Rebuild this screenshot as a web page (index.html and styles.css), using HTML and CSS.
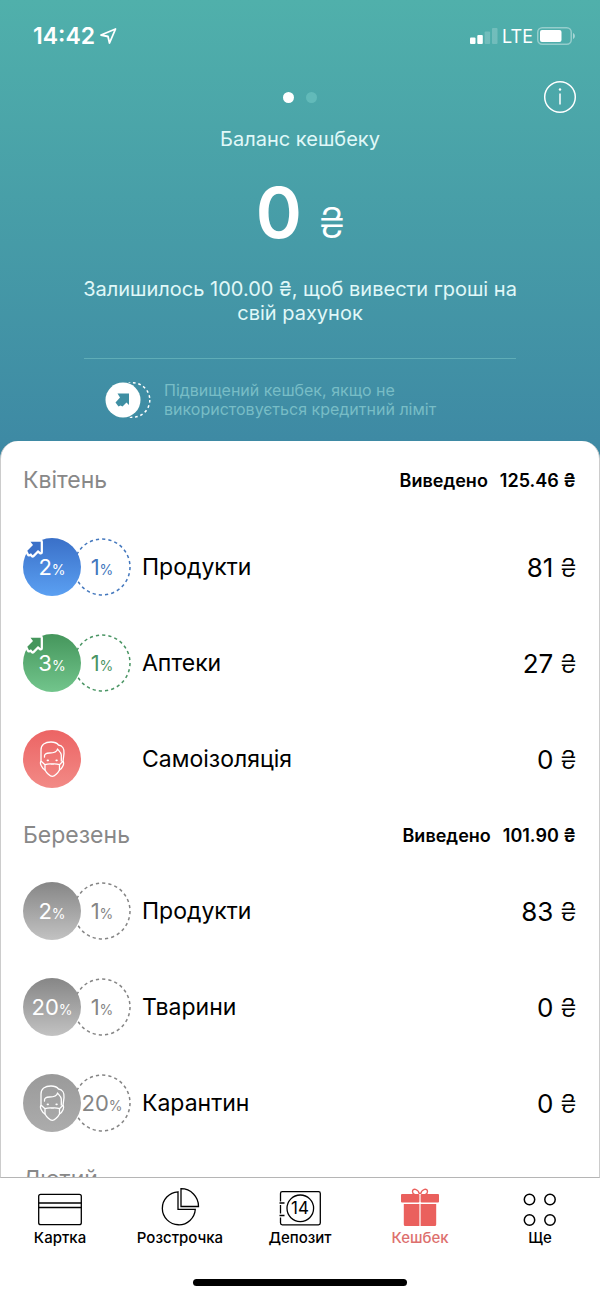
FILE: index.html
```html
<!DOCTYPE html>
<html lang="uk">
<head>
<meta charset="utf-8">
<meta name="viewport" content="width=device-width, initial-scale=1">
<title>Кешбек</title>
<link rel="stylesheet" href="styles.css">
</head>
<body>
<svg class="defs" aria-hidden="true">
  <symbol id="ring" viewBox="0 0 58 58"><circle cx="29" cy="29" r="28" fill="none" stroke="currentColor" stroke-width="1.5" stroke-dasharray="3.2 3.08"/></symbol>
  <symbol id="mask" viewBox="0 0 58 58">
    <g fill="none" stroke="#fff" stroke-width="1.3" stroke-linecap="round" stroke-linejoin="round">
      <path d="M18 31.500V20C18 15 22 12 28 12C31.500 12 34 13 35.500 15C39.500 15.500 41.500 19 41 23.500L40 31.500"/>
      <path d="M21.500 27C21 24.500 23 23 26.500 23C31 23 34 22 34.500 19C35.500 20.500 38 22 38.300 25V31"/>
      <path d="M18 31.500C16.500 33 18.500 38 22 40M40 31.500C41.500 33 40 38 36.500 40"/>
      <path d="M18.500 31.500L22 34.700C25 33.700 27 34 29.300 34C31.500 34 33.500 33.700 36.500 34.700L39.700 31.500M22 34.700V40C23.500 43 27 46.300 29.300 46.300C31.500 46.300 35 43 36.500 40V34.700"/>
      <path d="M24.500 30.300h.6M33.300 30.300h.6" stroke-width="1.800"/>
    </g>
  </symbol>
  <symbol id="boost" viewBox="0 0 24 24"><path d="M7.500 3.800H17.700V14.300L15 12L9.700 17.300L8 15.300L6 16.200L4.300 12.700L10 7Z" fill="currentColor" stroke="#fff" stroke-width="4.500" stroke-linejoin="round" paint-order="stroke"/></symbol>
</svg>
<div class="app">
  <header class="hero">
    <div class="status">
      <span class="clock">14:42
        <svg width="18" height="18" viewBox="0 0 18 18" fill="none" stroke="#fff" stroke-width="1.800" stroke-linejoin="round"><path d="M2 8L16.500 2L10.500 16L9 9.500Z"/></svg>
      </span>
      <span class="signal">
        <svg width="28" height="18" viewBox="0 0 28 18" fill="#fff"><rect x="0" y="10.500" width="5.500" height="6.500" rx="1"/><rect x="7.300" y="8" width="5.500" height="9" rx="1"/><g opacity=".2"><rect x="14.600" y="4.500" width="5.500" height="12.500" rx="1"/><rect x="22" y="1" width="5.500" height="16" rx="1"/></g></svg>
        LTE
        <svg width="39" height="18" viewBox="0 0 39 18"><rect x=".75" y=".75" width="33.500" height="16.500" rx="4.500" fill="none" stroke="#fff" stroke-opacity=".4" stroke-width="1.500"/><rect x="3" y="3" width="21.500" height="12" rx="2" fill="#fff"/><path d="M36 6c2.500 1 2.500 5 0 6z" fill="#fff" opacity=".5"/></svg>
      </span>
    </div>
    <div class="pager">
      <div class="dots"><i class="dot dot-on"></i><i class="dot"></i></div>
      <button class="info" type="button" aria-label="Інформація">
        <svg width="34" height="34" viewBox="0 0 34 34" fill="none" stroke="#fff" stroke-width="1.500"><circle cx="17" cy="17" r="15.300"/><path d="M17 13.500v11"/><circle cx="17" cy="9.500" r="1.200" fill="#fff" stroke="none"/></svg>
      </button>
    </div>
    <h1 class="title">Баланс кешбеку</h1>
    <p class="balance">0 <span class="currency">₴</span></p>
    <p class="left">Залишилось 100.00 ₴, щоб вивести гроші на свій рахунок</p>
    <div class="hint">
      <svg width="46" height="38" viewBox="0 0 46 38"><circle cx="27.500" cy="19" r="17.300" fill="none" stroke="#fff" stroke-width="1.500" stroke-dasharray="2.700 2.730"/><circle cx="18" cy="19" r="18.500" fill="#4290a3"/><circle cx="18" cy="19" r="17.500" fill="#fff"/><path d="M12.500 12.500H24V24L21.500 21.500L17.500 25.500L15.500 24.500L13.500 25.500L10.500 21.500L15 16.500Z" fill="#3f8fa3"/></svg>
      <span>Підвищений кешбек, якщо не використовується кредитний ліміт</span>
    </div>
  </header>
  <main class="sheet">
    <section>
      <div class="month month-first"><h2>Квітень</h2><p class="paid"><span>Виведено</span><span>125.46 ₴</span></p></div>
      <ul class="rows">
        <li class="row blue"><div class="badge"><span class="disc"><b>2<small>%</small></b><svg class="boost"><use href="#boost"/></svg></span><span class="ring"><svg><use href="#ring"/></svg><b>1<small>%</small></b></span></div><span class="name">Продукти</span><span class="sum">81 <i>₴</i></span></li>
        <li class="row green"><div class="badge"><span class="disc"><b>3<small>%</small></b><svg class="boost"><use href="#boost"/></svg></span><span class="ring"><svg><use href="#ring"/></svg><b>1<small>%</small></b></span></div><span class="name">Аптеки</span><span class="sum">27 <i>₴</i></span></li>
        <li class="row red"><div class="badge"><span class="disc"><svg class="mask"><use href="#mask"/></svg></span></div><span class="name">Самоізоляція</span><span class="sum">0 <i>₴</i></span></li>
      </ul>
    </section>
    <section>
      <div class="month"><h2>Березень</h2><p class="paid"><span>Виведено</span><span>101.90 ₴</span></p></div>
      <ul class="rows">
        <li class="row grey"><div class="badge"><span class="disc"><b>2<small>%</small></b></span><span class="ring"><svg><use href="#ring"/></svg><b>1<small>%</small></b></span></div><span class="name">Продукти</span><span class="sum">83 <i>₴</i></span></li>
        <li class="row grey"><div class="badge"><span class="disc"><b>20<small>%</small></b></span><span class="ring"><svg><use href="#ring"/></svg><b>1<small>%</small></b></span></div><span class="name">Тварини</span><span class="sum">0 <i>₴</i></span></li>
        <li class="row grey flat"><div class="badge"><span class="disc"><svg class="mask"><use href="#mask"/></svg></span><span class="ring"><svg><use href="#ring"/></svg><b>20<small>%</small></b></span></div><span class="name">Карантин</span><span class="sum">0 <i>₴</i></span></li>
      </ul>
    </section>
    <section>
      <div class="month"><h2>Лютий</h2></div>
    </section>
  </main>
  <nav class="tabs">
    <a class="tab" href="#card"><svg width="46" height="40" viewBox="0 0 46 40" fill="none" stroke="#000" stroke-width="1.300"><rect x="1.700" y="7.300" width="42.600" height="30.400" rx="2"/><path d="M1.700 16h42.600M1.700 20.500h42.600"/></svg>Картка</a>
    <a class="tab" href="#parts"><svg width="46" height="40" viewBox="0 0 46 40" fill="none" stroke="#000" stroke-width="1.300"><path d="M21 4.800A16.500 16.500 0 1 0 38.300 22.300H21Z"/><path d="M24 1.700A17.500 17.500 0 0 1 41.500 19.500H24Z"/></svg>Розстрочка</a>
    <a class="tab" href="#deposit"><svg width="46" height="40" viewBox="0 0 46 40" fill="none" stroke="#000" stroke-width="1.300"><path d="M3.500 14.500V6.500Q3.500 4.700 5.300 4.700H41.500Q43.300 4.700 43.300 6.500V36Q43.300 37.800 41.500 37.800H5.300Q3.500 37.800 3.500 36V30.500M3.500 18V26.500M2.500 16H7.500M2.500 28.500H7.500"/><circle cx="23.300" cy="21.300" r="13.300"/><text x="23" y="27" text-anchor="middle" class="coin">14</text></svg>Депозит</a>
    <a class="tab tab-on" href="#cashback" aria-current="page"><svg width="46" height="40" viewBox="0 0 46 40" fill="#ea605d"><rect x="4" y="7" width="18.400" height="8.500" rx="1"/><rect x="23.600" y="7" width="18.400" height="8.500" rx="1"/><path d="M6.800 17H22.400V39H8.300Q6.800 39 6.800 37.500ZM23.600 17H39.200V37.500Q39.200 39 37.700 39H23.600Z"/><g fill="none" stroke="#ea605d" stroke-width="1.400"><path d="M22.500 7C21 1.500 15.500 1 15.500 4.500Q15.500 6.500 17.500 7.500M23.500 7C25 1.500 30.500 1 30.500 4.500Q30.500 6.500 28.500 7.500"/></g></svg>Кешбек</a>
    <a class="tab" href="#more"><svg width="46" height="40" viewBox="0 0 46 40" fill="none" stroke="#000" stroke-width="1.500"><circle cx="12.500" cy="12.500" r="5.200"/><circle cx="33" cy="12.500" r="5.200"/><circle cx="12.500" cy="33" r="5.200"/><circle cx="33" cy="33" r="5.200"/></svg>Ще</a>
  </nav>
  <div class="home"></div>
</div>
</body>
</html>
```

FILE: styles.css
```css
* { box-sizing: border-box; margin: 0; padding: 0; }
body { font-family: Inter, "Liberation Sans", sans-serif; color: #000; background: #fff; }
svg { flex: none; display: block; }
.defs { display: none; }

.app {
  display: flex;
  flex-direction: column;
  height: 100vh;
  background: linear-gradient(#50b0ab, #3e8aa4 440px, #3a84a0 470px);
}

.hero { color: #fff; text-align: center; flex: none; }
.status { display: flex; justify-content: space-between; align-items: center; height: 72px; padding: 0 24px 0 33px; }
.clock { display: flex; align-items: center; gap: 4px; font-size: 23px; font-weight: 600; }
.signal { display: flex; align-items: center; gap: 4px; font-size: 18px; }
.pager { display: grid; grid-template-columns: 34px 1fr 34px; align-items: center; height: 50px; padding: 0 23px; }
.dots { grid-column: 2; display: flex; justify-content: center; gap: 12px; }
.dot { width: 11px; height: 11px; border-radius: 50%; background: #62bab9; }
.dot-on { background: #fff; }
.info { width: 34px; height: 34px; border: 0; background: none; }
.title { font-size: 20px; line-height: 34px; font-weight: 400; color: #e0f8f8; }
.balance { margin-top: 14px; font-size: 70px; line-height: 86px; font-weight: 600; }
.currency { font-size: 42px; font-weight: 300; }
.left { margin: 11px 72px 0; font-size: 20px; line-height: 24px; color: #e0f8f8; }
.hint {
  display: flex;
  align-items: center;
  gap: 13px;
  margin: 33px 14% 0;
  padding: 22px 60px 22px 21px;
  border-top: 1px solid #5fadb7;
  font-size: 16px;
  line-height: 19px;
  text-align: left;
  color: #78bdc6;
}

.sheet {
  flex: 1;
  min-height: 0;
  overflow: hidden;
  padding: 0 23px 0 22px;
  border: 1px solid #ccc;
  border-top: 0;
  border-bottom-color: #b5b5b5;
  border-radius: 18px 18px 0 0;
  background: #fff;
}
.month { display: flex; justify-content: space-between; align-items: center; height: 56px; }
.month-first { height: 78px; }
.month h2 { font-size: 23px; font-weight: 400; color: #888; }
.paid { display: flex; gap: 12px; font-size: 18px; font-weight: 600; }
.rows { list-style: none; }
.row { display: flex; align-items: center; height: 96px; }
.name { flex: 1; font-size: 23px; }
.sum { font-size: 26px; }
.sum i { font-style: normal; font-weight: 300; }

.badge { display: flex; flex: none; width: 119px; }
.disc, .ring { position: relative; display: grid; place-items: center; width: 58px; height: 58px; }
.disc { z-index: 1; border-radius: 50%; color: #fff; background: linear-gradient(var(--from), var(--to)); }
.ring { margin-left: -8px; color: var(--line); }
.badge b { grid-area: 1 / 1; font-size: 22px; font-weight: 400; }
.badge small { font-size: 14px; }
.ring svg, .mask { grid-area: 1 / 1; width: 58px; height: 58px; }
.boost { position: absolute; left: 0; top: 0; width: 24px; height: 24px; color: var(--from); }
.blue { --from: #3a70c8; --to: #5ba0f2; --line: #4377bd; }
.green { --from: #45965c; --to: #72c58c; --line: #4a9564; }
.red { --from: #ec6464; --to: #f28a86; }
.grey { --from: #868686; --to: #c2c2c2; --line: #858585; }
.flat { --from: #9a9a9a; --to: #acacac; }

.tabs { display: grid; grid-template-columns: repeat(5, 1fr); flex: none; padding: 9px 0 26px; background: #fff; }
.tab { display: flex; flex-direction: column; align-items: center; gap: 2px; font-size: 15px; line-height: 18px; font-weight: 500; color: #000; text-decoration: none; }
.tab-on { color: #dd706e; }
.coin { font-size: 17px; font-weight: 400; fill: #000; stroke: none; }
.home { flex: none; height: 24px; background: #fff; }
.home::before { content: ""; display: block; width: 214px; height: 7px; margin: 6px auto 0; border-radius: 4px; background: #000; }
```
